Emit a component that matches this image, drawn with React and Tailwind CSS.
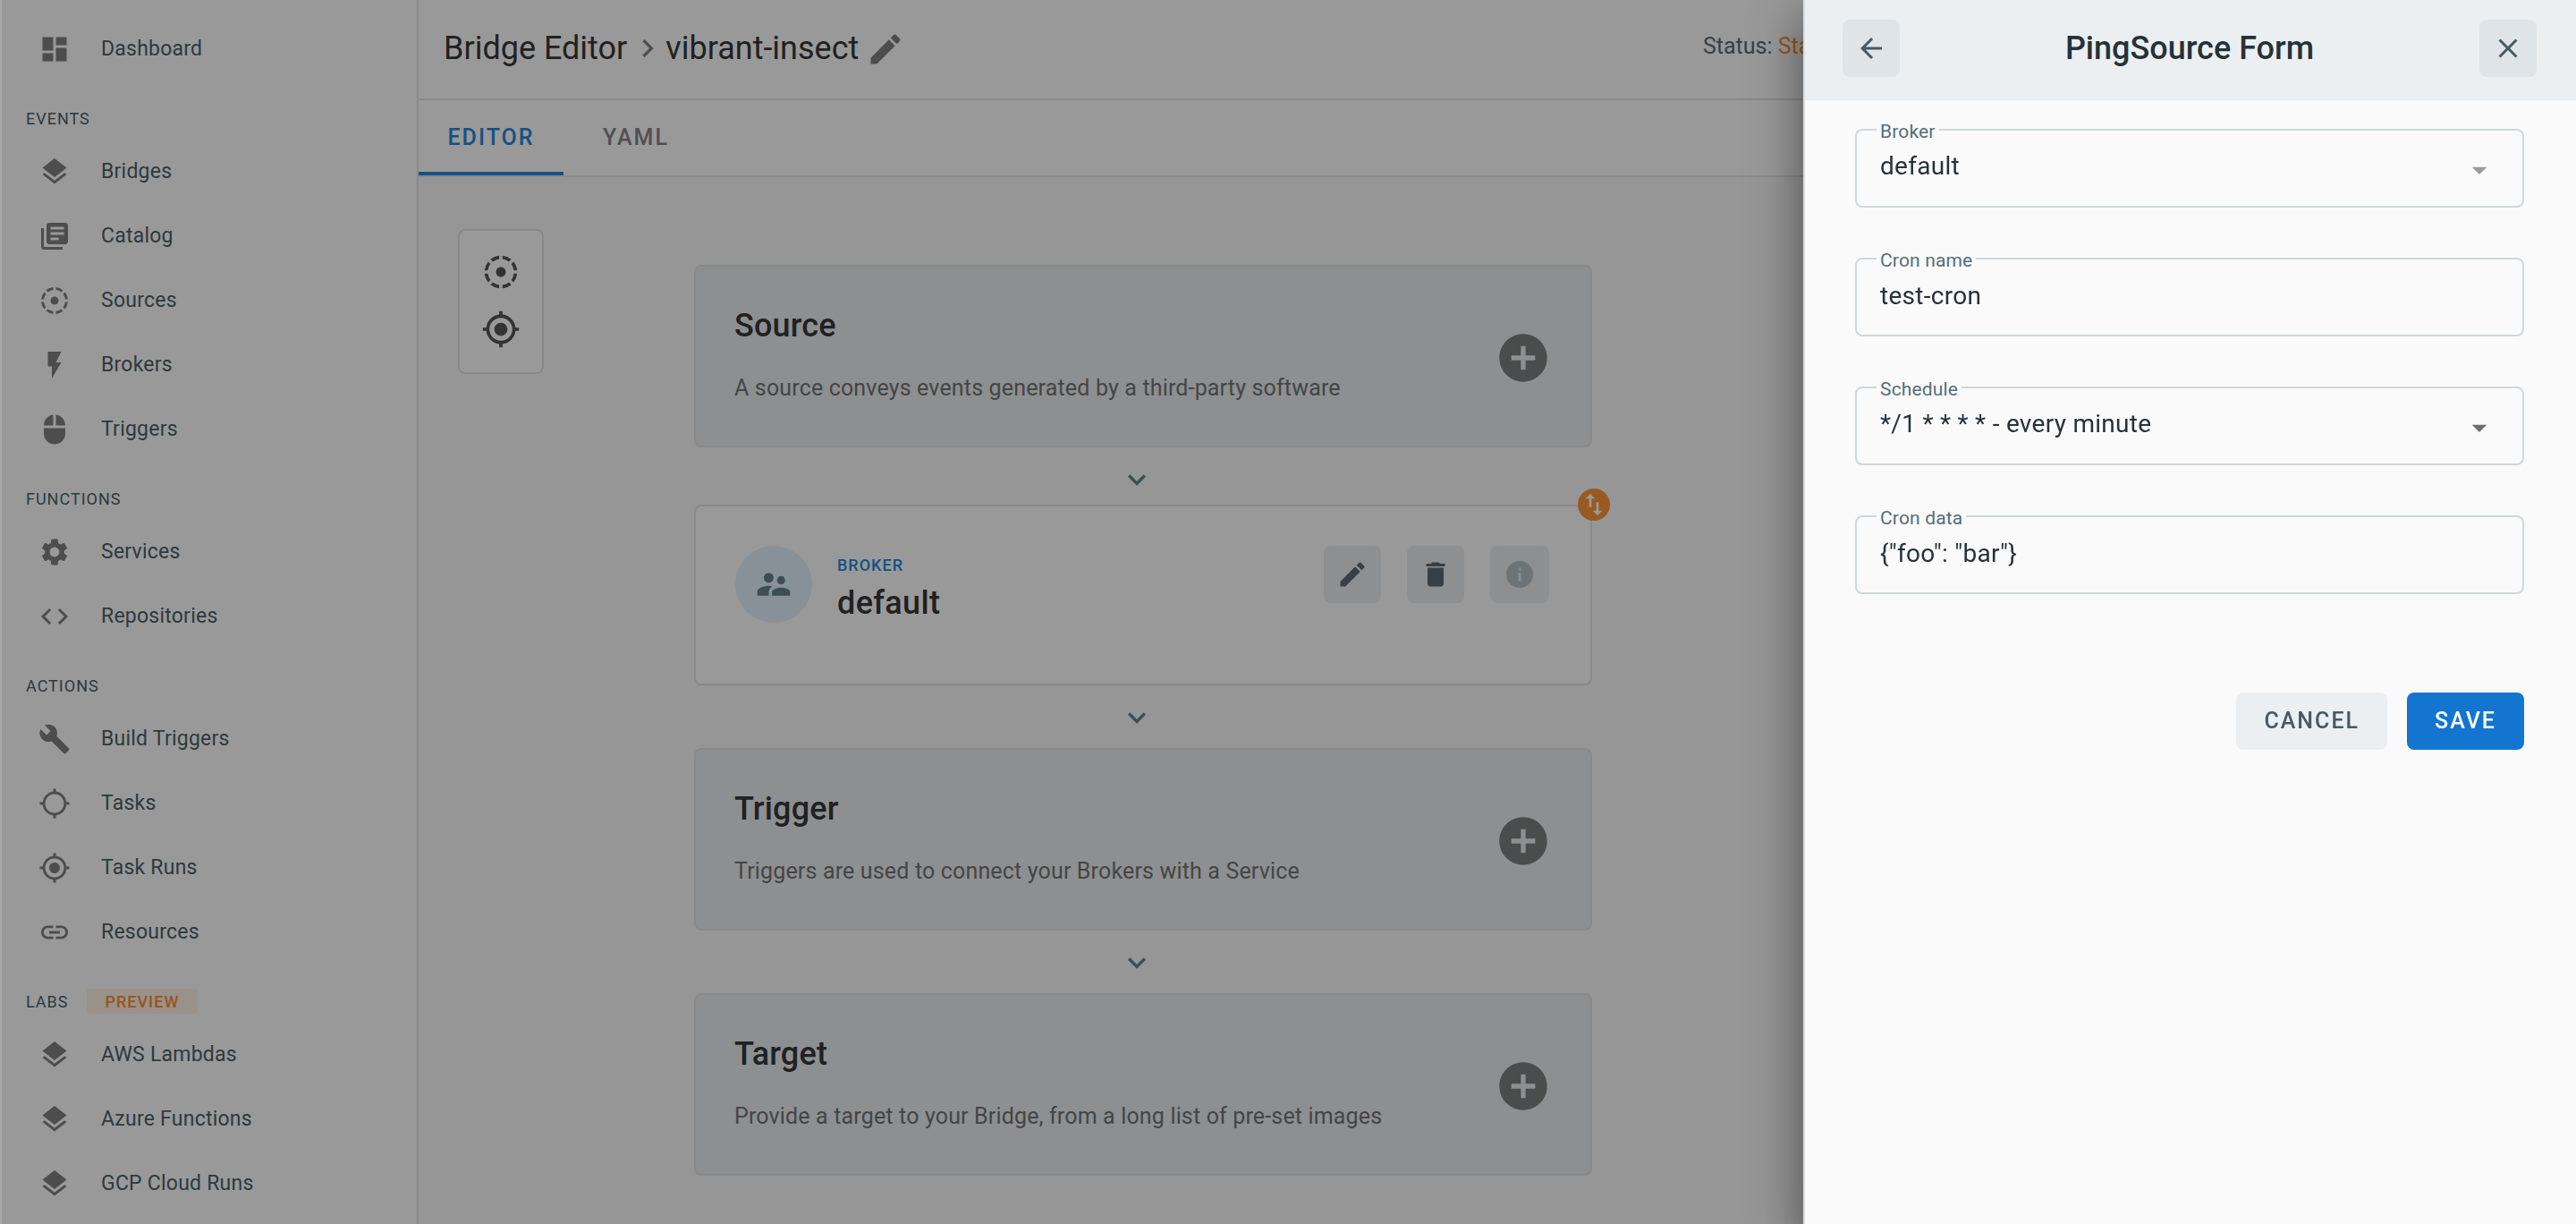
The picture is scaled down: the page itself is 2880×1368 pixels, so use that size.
import React from "react";
import {
  MdDashboard,
  MdLayers,
  MdLibraryBooks,
  MdFilterTiltShift,
  MdFlashOn,
  MdMouse,
  MdSettings,
  MdCode,
  MdBuild,
  MdLocationSearching,
  MdMyLocation,
  MdLink,
  MdChevronRight,
  MdKeyboardArrowDown,
  MdAddCircle,
  MdEdit,
  MdDelete,
  MdInfo,
  MdSupervisorAccount,
  MdImportExport,
  MdArrowBack,
  MdClose,
  MdArrowDropDown,
} from "react-icons/md";

const sections = [
  { items: [["Dashboard", MdDashboard]] },
  {
    label: "EVENTS",
    items: [
      ["Bridges", MdLayers],
      ["Catalog", MdLibraryBooks],
      ["Sources", MdFilterTiltShift],
      ["Brokers", MdFlashOn],
      ["Triggers", MdMouse],
    ],
  },
  {
    label: "FUNCTIONS",
    items: [
      ["Services", MdSettings],
      ["Repositories", MdCode],
    ],
  },
  {
    label: "ACTIONS",
    items: [
      ["Build Triggers", MdBuild],
      ["Tasks", MdLocationSearching],
      ["Task Runs", MdMyLocation],
      ["Resources", MdLink],
    ],
  },
  {
    label: "LABS",
    badge: "PREVIEW",
    items: [
      ["AWS Lambdas", MdLayers],
      ["Azure Functions", MdLayers],
      ["GCP Cloud Runs", MdLayers],
    ],
  },
];

function Sidebar() {
  return (
    <nav className="w-[466px] shrink-0 border-r-2 border-[#e4e4e4] bg-white pt-[19px] text-[#4e5f68]">
      {sections.map((s) => (
        <div key={s.items[0][0]}>
          {s.label && (
            <h2 className="flex h-[65px] items-center gap-5 pt-[17px] pl-[27px] text-[18px] tracking-[1px]">
              {s.label}
              {s.badge && (
                <span className="flex h-7 items-center rounded bg-[#fff3e6] px-[21px] font-medium text-[#ff8c32]">
                  {s.badge}
                </span>
              )}
            </h2>
          )}
          <ul>
            {s.items.map(([name, Icon]) => (
              <li key={name}>
                <a href="#" className="flex h-[72px] items-center gap-[34px] pl-[41px] text-[23px] tracking-[0.01em]">
                  <Icon className="size-9 text-[#808080]" />
                  {name}
                </a>
              </li>
            ))}
          </ul>
        </div>
      ))}
    </nav>
  );
}

function StepCard({ title, text }) {
  return (
    <section className="flex h-[204px] items-center justify-between rounded-lg border-2 border-[#e4e4e4] bg-[#eceff1] pt-1 pr-[43px] pl-[43px] tracking-[0.01em]">
      <div className="flex flex-col gap-[34px] pb-[6px]">
        <h3 className="text-[36px] leading-10 font-medium text-[#383838]">{title}</h3>
        <p className="text-[25px] leading-8 text-[#737373]">{text}</p>
      </div>
      <button type="button" aria-label={"Add " + title} className="text-[#7d7f7f]">
        <MdAddCircle className="size-16" />
      </button>
    </section>
  );
}

function Connector() {
  return (
    <div className="flex justify-center pt-4 pr-[14px] pb-[14px] text-[#64808c]">
      <MdKeyboardArrowDown className="size-10" />
    </div>
  );
}

function BrokerCard() {
  return (
    <section className="relative flex h-[202px] items-start rounded-lg border-2 border-[#e4e4e4] bg-white py-11 pr-[46px] pl-11">
      <span className="absolute -top-5 -right-[22px] flex size-9 items-center justify-center rounded-full bg-[#ff9639] text-white">
        <MdImportExport className="size-8" />
      </span>
      <span className="flex size-[86px] items-center justify-center rounded-full bg-[#e3f2fd] text-[#64808c]">
        <MdSupervisorAccount className="size-11" />
      </span>
      <div className="ml-7 flex flex-col pt-2">
        <span className="text-[18px] leading-7 font-medium tracking-[1px] text-[#2685d9]">BROKER</span>
        <h3 className="text-[36px] leading-[56px] font-medium tracking-[0.01em] text-[#383838]">default</h3>
      </div>
      <div className="ml-auto flex gap-[29px] text-[#5a6c76]">
        <button type="button" aria-label="Edit" className="flex size-16 items-center justify-center rounded-lg bg-[#eceff1]">
          <MdEdit className="size-9" />
        </button>
        <button type="button" aria-label="Delete" className="flex size-16 items-center justify-center rounded-lg bg-[#eceff1]">
          <MdDelete className="size-9" />
        </button>
        <button type="button" aria-label="Info" disabled className="flex h-16 w-[66px] items-center justify-center rounded-lg bg-[#eceff1] text-[#b6c1c6]">
          <MdInfo className="size-9" />
        </button>
      </div>
    </section>
  );
}

function Editor() {
  return (
    <main className="flex grow flex-col bg-[#fafafa]">
      <header className="flex h-28 items-center border-b-2 border-[#e4e4e4] bg-white pr-8 pb-[2px] pl-7">
        <h1 className="flex items-center text-[36px] leading-10 text-[#383838]">
          Bridge Editor
          <MdChevronRight className="ml-[3px] size-10 text-[#808080]" />
          vibrant-insect
        </h1>
        <button type="button" aria-label="Rename bridge" className="ml-2 pt-[2px] text-[#808080]">
          <MdEdit className="size-11" />
        </button>
        <p className="ml-auto w-[944px] pb-1 text-[25px] leading-8 text-[#5a6c76]">
          Status: <span className="text-[#ff8c32]">Sta</span>
        </p>
      </header>
      <div role="tablist" className="flex h-[86px] border-b-2 border-[#e4e4e4] bg-white text-[25px] font-medium tracking-[2px]">
        <button type="button" role="tab" aria-selected="true" className="min-w-[162px] border-b-4 border-[#2685d9] px-8 pt-1 text-[#2685d9]">
          EDITOR
        </button>
        <button type="button" role="tab" aria-selected="false" className="min-w-[162px] border-b-4 border-transparent px-8 pt-1 text-[#858585]">
          YAML
        </button>
      </div>
      <div className="flex items-start pl-[44px]">
        <div className="mt-[58px] flex flex-col gap-5 rounded-lg border-2 border-[#e4e4e4] bg-white px-6 pt-6 pb-[26px] text-[#555555]">
          <button type="button" aria-label="Sources">
            <MdFilterTiltShift className="size-11" />
          </button>
          <button type="button" aria-label="Targets">
            <MdMyLocation className="size-11" />
          </button>
        </div>
        <div className="mt-[98px] ml-[168px] w-full max-w-[1004px]">
          <StepCard title="Source" text="A source conveys events generated by a third-party software" />
          <div className="-mb-[6px]">
            <Connector />
          </div>
          <BrokerCard />
          <Connector />
          <StepCard title="Trigger" text="Triggers are used to connect your Brokers with a Service" />
          <Connector />
          <StepCard title="Target" text="Provide a target to your Bridge, from a long list of pre-set images" />
        </div>
      </div>
    </main>
  );
}

function Field({ id, label, children }) {
  return (
    <div className="relative h-[88px] rounded-lg border-2 border-[#cfd8dc] tracking-[0.01em]">
      <label htmlFor={id} className="absolute -top-[13px] left-[22px] bg-[#fafafa] px-1 text-[21px] leading-7 text-[#546e7a]">
        {label}
      </label>
      {children}
    </div>
  );
}

const controlClass =
  "h-full w-full appearance-none bg-transparent px-[26px] pb-1 text-[28px] tracking-[0.01em] text-[#263238] outline-none";

function Drawer() {
  return (
    <aside className="fixed inset-y-0 right-0 w-[30vw] border-l-2 border-[#dadcde] bg-[#fafafa] shadow-[0_32px_40px_4px_rgba(0,0,0,0.24),0_12px_56px_10px_rgba(0,0,0,0.2)]">
      <header className="flex h-28 items-center justify-between bg-[#ebeff2] pr-11 pb-1 pl-[42px]">
        <button type="button" aria-label="Back" className="flex size-16 items-center justify-center rounded-lg bg-[#dfe4e8] text-[#455a64]">
          <MdArrowBack className="size-9" />
        </button>
        <h2 className="text-[36px] leading-10 font-medium text-[#263238]">PingSource Form</h2>
        <button type="button" aria-label="Close" className="flex size-16 items-center justify-center rounded-lg bg-[#dfe4e8] text-[#455a64]">
          <MdClose className="size-9" />
        </button>
      </header>
      <form className="flex flex-col gap-14 pt-8 pr-[58px] pl-14">
        <Field id="broker" label="Broker">
          <select id="broker" defaultValue="default" className={controlClass}>
            <option>default</option>
          </select>
          <MdArrowDropDown className="pointer-events-none absolute top-6 right-7 size-10 text-[#9b9b9b]" />
        </Field>
        <Field id="cron-name" label="Cron name">
          <input id="cron-name" defaultValue="test-cron" className={controlClass} />
        </Field>
        <Field id="schedule" label="Schedule">
          <select id="schedule" defaultValue="*/1 * * * * - every minute" className={controlClass}>
            <option>*/1 * * * * - every minute</option>
          </select>
          <MdArrowDropDown className="pointer-events-none absolute top-6 right-7 size-10 text-[#6f6f6f]" />
        </Field>
        <Field id="cron-data" label="Cron data">
          <input id="cron-data" defaultValue={'{"foo": "bar"}'} className={controlClass} />
        </Field>
        <div className="flex justify-end gap-[22px] pt-[54px] text-[25px] font-medium tracking-[2px]">
          <button type="button" className="h-16 rounded-lg bg-[#eceff1] px-[31px] text-[#455a64]">
            CANCEL
          </button>
          <button type="button" className="h-16 rounded-lg bg-[#1375d0] px-[31px] text-white">
            SAVE
          </button>
        </div>
      </form>
    </aside>
  );
}

export default function App() {
  return (
    <div className="relative flex min-h-screen overflow-hidden border-l-2 border-[#aaaaaa] font-[Roboto,sans-serif]">
      <Sidebar />
      <Editor />
      <div className="absolute inset-0 bg-black/40" />
      <Drawer />
    </div>
  );
}
